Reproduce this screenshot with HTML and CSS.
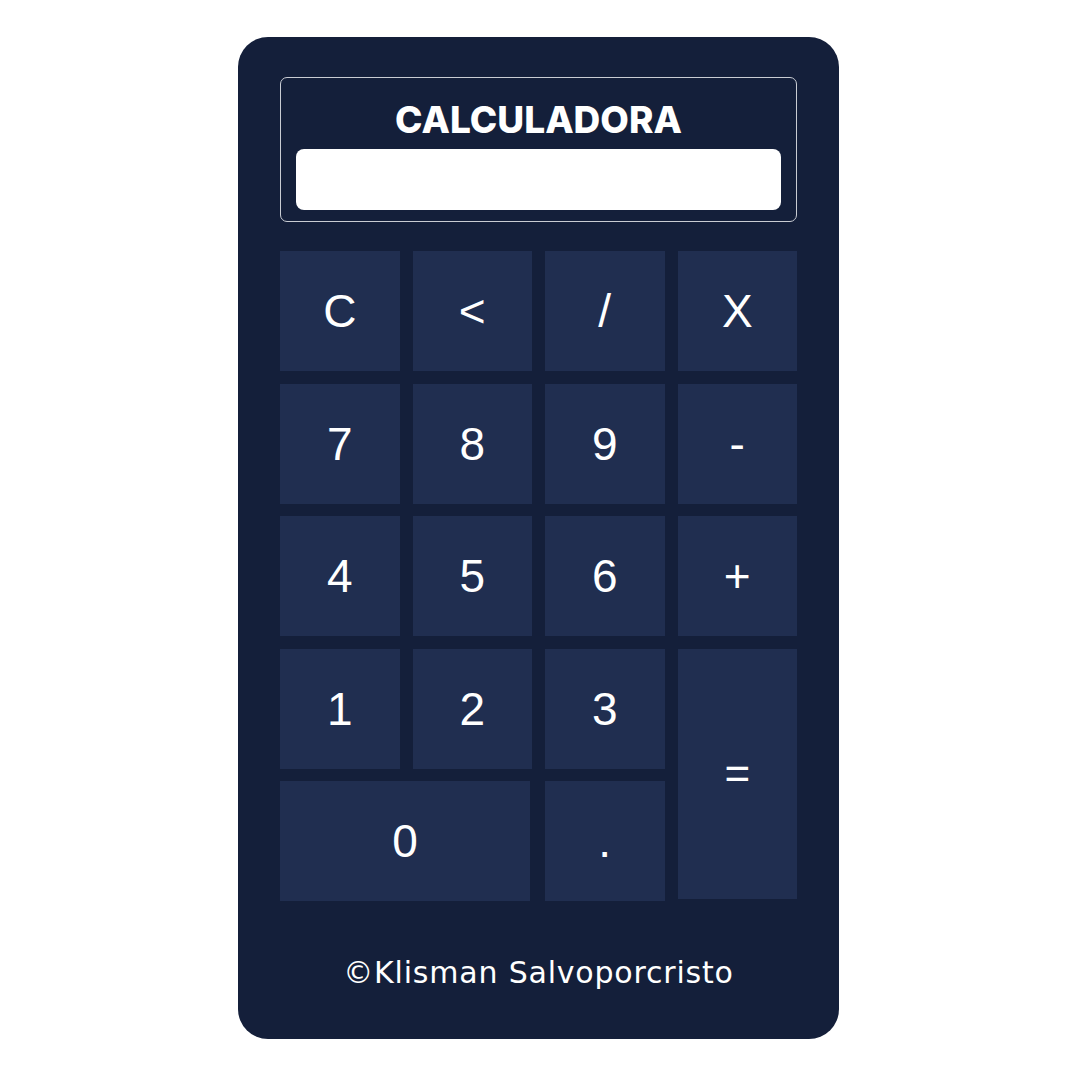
FILE: index.html
```html
<!DOCTYPE html>
<html lang="es">
<head>
<meta charset="utf-8">
<title>Calculadora</title>
<link rel="stylesheet" href="styles.css">
</head>
<body>
<div class="page">
  <div class="card">
    <div class="display">
      <h1 class="title">CALCULADORA</h1>
      <input class="screen" type="text" readonly>
    </div>
    <div class="keys">
      <button class="key">C</button>
      <button class="key">&lt;</button>
      <button class="key">/</button>
      <button class="key">X</button>
      <button class="key">7</button>
      <button class="key">8</button>
      <button class="key">9</button>
      <button class="key">-</button>
      <button class="key">4</button>
      <button class="key">5</button>
      <button class="key">6</button>
      <button class="key">+</button>
      <button class="key">1</button>
      <button class="key">2</button>
      <button class="key">3</button>
      <button class="key key-eq">=</button>
      <button class="key key-zero">0</button>
      <button class="key">.</button>
    </div>
    <p class="footer">©Klisman Salvoporcristo</p>
  </div>
</div>
</body>
</html>
```
FILE: styles.css
```css
* { box-sizing: border-box; }
html, body { margin: 0; padding: 0; background: #ffffff; }
.page {
  display: flex;
  justify-content: flex-start;
  padding: 37px 0 0 238px;
}
.card {
  width: 601px;
  background: #141f3a;
  border-radius: 30px;
  padding: 40px 42px 46px 42px;
  display: flex;
  flex-direction: column;
}
.display {
  border: 1px solid #c9ccd3;
  border-radius: 7px;
  padding: 24px 15px 11px 15px;
  display: flex;
  flex-direction: column;
}
.title {
  margin: 0;
  height: 36px;
  line-height: 36px;
  text-align: center;
  color: #ffffff;
  font-family: "Inter", "Open Sans", sans-serif;
  font-weight: 800;
  font-size: 37px;
  letter-spacing: 0;
}
.screen {
  margin-top: 11px;
  height: 61px;
  width: 100%;
  border: none;
  border-radius: 8px;
  background: #ffffff;
  outline: none;
}
.keys {
  margin-top: 29px;
  display: grid;
  grid-template-columns: repeat(4, 1fr);
  grid-auto-rows: 120px;
  column-gap: 13px;
  row-gap: 12.5px;
}
.key {
  border: none;
  background: #202e50;
  color: #ffffff;
  font-family: "Liberation Sans", Arial, sans-serif;
  font-size: 46px;
  padding: 0;
  display: flex;
  align-items: center;
  justify-content: center;
}
.key-eq {
  grid-row: span 2;
  height: 250px;
  font-size: 44px;
}
.key-zero {
  grid-column: span 2;
  width: 250px;
}
.footer {
  margin: 52px 0 0 0;
  height: 40px;
  line-height: 40px;
  text-align: center;
  color: #ffffff;
  font-family: "DejaVu Sans", "Open Sans", sans-serif;
  font-size: 30px;
  letter-spacing: 0.8px;
}
```
